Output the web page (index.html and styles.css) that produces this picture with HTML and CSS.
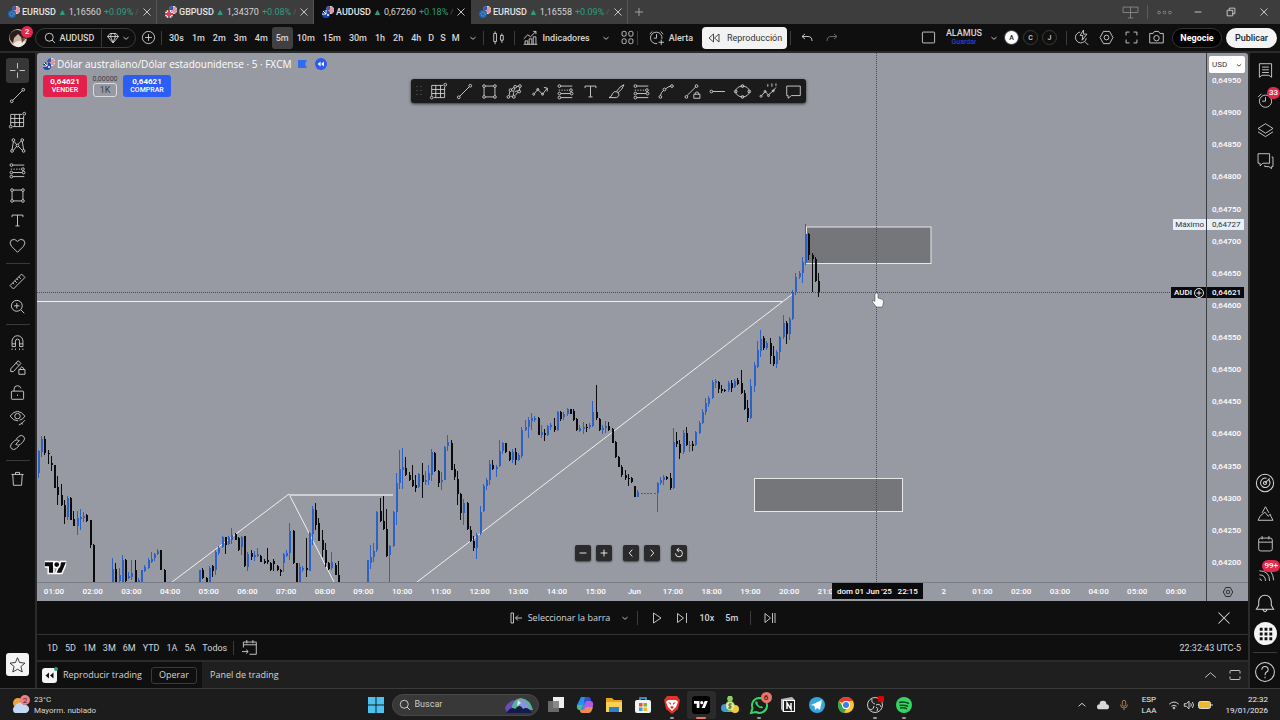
FILE: index.html
```
<!DOCTYPE html>
<html lang="es">
  <head>
    <meta charset="UTF-8" />
    <meta name="viewport" content="width=device-width, initial-scale=1.0" />
    <title>AUDUSD 0,67260</title>
    <link rel="stylesheet" href="styles.css">
  </head>
  <body>
    <svg class="sprite" aria-hidden="true">
      <symbol id="close" viewBox="0 0 28 28"><path d="M7 7l14 14M21 7L7 21"/></symbol>
      <symbol id="plus" viewBox="0 0 28 28"><path d="M14 6v16M6 14h16"/></symbol>
      <symbol id="minus" viewBox="0 0 28 28"><path d="M6 14h16"/></symbol>
      <symbol id="down" viewBox="0 0 28 28"><path d="M8 12l6 5 6-5"/></symbol>
      <symbol id="up" viewBox="0 0 28 28"><path d="M6 17l8-7 8 7"/></symbol>
      <symbol id="left" viewBox="0 0 28 28"><path d="M17 6l-7 8 7 8"/></symbol>
      <symbol id="right" viewBox="0 0 28 28"><path d="M11 6l7 8-7 8"/></symbol>
      <symbol id="search" viewBox="0 0 28 28"><circle cx="12.500" cy="12.500" r="8"/><path d="M18 18l6 6"/></symbol>
      <symbol id="gem" viewBox="0 0 28 28"><path d="M8 5h12l5 6-11 13L3 11zM3 11h22M9 11l5 12 5-12M11 5l-2 6M17 5l2 6"/></symbol>
      <symbol id="plus-circle" viewBox="0 0 28 28"><circle cx="14" cy="14" r="9"/><path d="M14 9v10M9 14h10"/></symbol>
      <symbol id="candles" viewBox="0 0 28 28"><path d="M7 8h4v12H7zM9 5v3M9 20v4M17 11h4v7h-4zM19 8v3M19 18v4"/></symbol>
      <symbol id="indicators" viewBox="0 0 28 28"><path d="M6 24v-5h4v5M12 24v-8h4v8M18 24V13h4v11M4 24h20M4 16l6-6 4 3 8-8M18 5h4v4"/></symbol>
      <symbol id="grid4" viewBox="0 0 28 28"><rect x="6" y="5" width="6" height="7" rx="2"/><rect x="16" y="5" width="6" height="7" rx="2"/><rect x="6" y="16" width="6" height="7" rx="2"/><rect x="16" y="16" width="6" height="7" rx="2"/></symbol>
      <symbol id="alarm" viewBox="0 0 28 28"><path d="M22 16a8.500 8.500 0 1 0-7 7M14 9v6h-4M4 9l4-4M24 9l-4-4M21 17v8M17 21h8"/></symbol>
      <symbol id="clock" viewBox="0 0 28 28"><circle cx="14" cy="15" r="9"/><path d="M14 9v6H9M3 9l5-5M25 9l-5-5"/></symbol>
      <symbol id="rewind" viewBox="0 0 28 28"><path d="M13 6l-9 8 9 8zM24 6l-9 8 9 8z"/></symbol>
      <symbol id="undo" viewBox="0 0 28 28"><path d="M10 6l-6 5 6 5M4 11h12q8 0 8 9"/></symbol>
      <symbol id="redo" viewBox="0 0 28 28"><path d="M18 6l6 5-6 5M24 11H12q-8 0-8 9"/></symbol>
      <symbol id="pane" viewBox="0 0 28 28"><rect x="5" y="6" width="18" height="16" rx="1"/></symbol>
      <symbol id="quick" viewBox="0 0 28 28"><path d="M12 6a8 8 0 1 0 9 9M19 20l5 5M17 3l-5 8h4l-1 7 7-9h-5z"/></symbol>
      <symbol id="hex" viewBox="0 0 28 28"><path d="M9.500 5h9l5 9-5 9h-9l-5-9z"/><circle cx="14" cy="14" r="3.500"/></symbol>
      <symbol id="full" viewBox="0 0 28 28"><path d="M6 11V6h5M17 6h5v5M22 17v5h-5M11 22H6v-5"/></symbol>
      <symbol id="camera" viewBox="0 0 28 28"><path d="M4 8h5l2-3h6l2 3h5v14H4z"/><circle cx="14" cy="15" r="4"/></symbol>

      <symbol id="cross" viewBox="0 0 28 28"><path d="M14 3v8M14 17v8M3 14h8M17 14h8"/></symbol>
      <symbol id="trend" viewBox="0 0 28 28"><circle cx="5.500" cy="22.500" r="2"/><circle cx="22.500" cy="5.500" r="2"/><path d="M7 21L21 7"/></symbol>
      <symbol id="fibgrid" viewBox="0 0 28 28"><path d="M4 5h17M4 11h19M4 17h19M7 23h16M4 5v16M10 5v18M17 5v18M23 7v16"/><circle cx="4" cy="23" r="2"/><circle cx="24" cy="4" r="2"/></symbol>
      <symbol id="pattern" viewBox="0 0 28 28"><circle cx="6" cy="22" r="2"/><circle cx="8" cy="6" r="2"/><circle cx="14" cy="14" r="2"/><circle cx="21" cy="6" r="2"/><circle cx="23" cy="22" r="2"/><path d="M6 20L8 8M9 8l4 5M15 12l5-5M21 8l2 12M8 21l5-6M15 15l6 6"/></symbol>
      <symbol id="fib" viewBox="0 0 28 28"><path d="M7 6h17M7 17h14M7 23h17"/><path d="M4 12h15" stroke-dasharray="2 2"/><circle cx="5" cy="6" r="2"/><circle cx="22" cy="12" r="2"/><circle cx="5" cy="17" r="2"/><circle cx="5" cy="23" r="2"/><circle cx="23" cy="17" r="2"/></symbol>
      <symbol id="rect" viewBox="0 0 28 28"><path d="M8 6h12M8 22h12M6 8v12M22 8v12"/><circle cx="6" cy="6" r="2"/><circle cx="22" cy="6" r="2"/><circle cx="6" cy="22" r="2"/><circle cx="22" cy="22" r="2"/></symbol>
      <symbol id="type" viewBox="0 0 28 28"><path d="M6 9V6h16v3M14 6v16M11 22h6"/></symbol>
      <symbol id="heart" viewBox="0 0 28 28"><path d="M14 24L5 15q-4-5 0-9 5-3 9 2 4-5 9-2 4 4 0 9z"/></symbol>
      <symbol id="ruler" viewBox="0 0 28 28"><path d="M3 20L20 3l5 5L8 25zM7 16l2 2M10 13l3 3M13 10l2 2M16 7l3 3"/></symbol>
      <symbol id="zoomin" viewBox="0 0 28 28"><circle cx="13" cy="13" r="8"/><path d="M13 9v8M9 13h8M19 19l5 5"/></symbol>
      <symbol id="magnet" viewBox="0 0 28 28"><path d="M6 20v-8a8 8 0 0 1 16 0v8h-5v-8a3 3 0 0 0-6 0v8zM6 16h5M17 16h5M6 23v2M11 23v2M17 23v2M22 23v2"/></symbol>
      <symbol id="pencil" viewBox="0 0 28 28"><path d="M4 20v-4L15 4l4 4L8 20zM12 7l4 4M16 17h9v7h-9zM18 17v-2q2.500-4 5 0v2"/></symbol>
      <symbol id="lock" viewBox="0 0 28 28"><rect x="5" y="12" width="18" height="12" rx="1"/><path d="M9 12V9q0-5 5-5 4 0 5 4M14 17v2"/></symbol>
      <symbol id="eye" viewBox="0 0 28 28"><path d="M3 12q11-14 22 0-3 5-8 6M3 12q5 7 12 7"/><circle cx="14" cy="12" r="4"/><path d="M16 25l4-2 5-5M19 22l3 2"/></symbol>
      <symbol id="link" viewBox="0 0 28 28"><path d="M12 9l4-4q4-3 7 0t0 7l-5 5q-3 2-6 0M16 19l-4 4q-4 3-7 0t0-7l5-5q3-2 6 0M11 17l6-6"/></symbol>
      <symbol id="trash" viewBox="0 0 28 28"><path d="M5 8h18M11 8V5h6v3M7 8l1 16h12l1-16"/></symbol>
      <symbol id="star" viewBox="0 0 28 28"><path d="M14 4l3 7 8 1-6 5 2 8-7-4-7 4 2-8-6-5 8-1z"/></symbol>

      <symbol id="list" viewBox="0 0 28 28"><path d="M5 4h18v20l-4-3H9l-4 3zM9 9h10M9 13h10M9 17h10"/></symbol>
      <symbol id="layers" viewBox="0 0 28 28"><path d="M3 11l11-7 11 7-11 7zM3 16l11 7 11-7"/></symbol>
      <symbol id="chat" viewBox="0 0 28 28"><path d="M3 4h17v14H10l-4 4v-4H3zM23 9h2v14h-2v3l-4-3h-6v-2"/></symbol>
      <symbol id="target" viewBox="0 0 28 28"><circle cx="14" cy="14" r="11"/><path d="M19 10a6 6 0 1 1-3-2M14 14l6-6"/><circle cx="14" cy="14" r="2"/></symbol>
      <symbol id="mount" viewBox="0 0 28 28"><path d="M9 13l5-9 5 9M3 24l3-6M3 24h22l-3-6M6 18l7-6 5 6 3-3 1 3"/></symbol>
      <symbol id="calendar" viewBox="0 0 28 28"><rect x="4" y="6" width="20" height="19" rx="3"/><path d="M4 12h20M9 3v5M19 3v5"/></symbol>
      <symbol id="feed" viewBox="0 0 28 28"><path d="M5 22q3 0 3 3M5 16q9 0 9 9M5 10q15 0 15 15M12 4q13 5 14 20"/></symbol>
      <symbol id="bell" viewBox="0 0 28 28"><path d="M3 22h22l-3-5v-5q-1-8-8-8t-8 8v5zM11 22q3 6 6 0"/></symbol>
      <symbol id="help" viewBox="0 0 28 28"><circle cx="14" cy="14" r="12"/><path d="M10 11q0-4 4-4t4 4q0 2-2 3t-2 4M14 20v2"/></symbol>

      <symbol id="poly" viewBox="0 0 28 28"><path d="M6 20l1-6M9 11l4-3M17 7l3-1M22 8l-1 5M19 15l-4 5M11 21H8M10 13l3 1 1-5M15 14l4-1M13 15l-1 5"/><circle cx="5" cy="22" r="2"/><circle cx="8" cy="12" r="2"/><circle cx="22" cy="6" r="2"/><circle cx="13" cy="22" r="2"/><circle cx="15" cy="7" r="2"/><circle cx="21" cy="14" r="2"/></symbol>
      <symbol id="zigzag" viewBox="0 0 28 28"><path d="M5 17l5-6 7 7 7-9M19 8l5 1v5"/><circle cx="4" cy="18" r="1.500"/><circle cx="10" cy="11" r="1.500"/><circle cx="17" cy="18" r="1.500"/></symbol>
      <symbol id="brush" viewBox="0 0 28 28"><path d="M3 23q4-1 5-6 3-5 8-2 4 5-2 8zM14 14q5-8 11-10-2 7-9 12"/></symbol>
      <symbol id="curve" viewBox="0 0 28 28"><path d="M5 20Q6 15 10 12M13 10q3-3 7-4"/><circle cx="5" cy="22" r="2"/><circle cx="11" cy="11" r="2"/><circle cx="22" cy="6" r="2"/></symbol>
      <symbol id="trendlock" viewBox="0 0 28 28"><path d="M6 20L19 7M16 18h9v6h-9zM18 18v-2q2.500-3 5 0v2"/><circle cx="5" cy="22" r="2"/><circle cx="20" cy="6" r="2"/></symbol>
      <symbol id="hline" viewBox="0 0 28 28"><path d="M7 14h18"/><circle cx="5" cy="14" r="2"/></symbol>
      <symbol id="ellipse" viewBox="0 0 28 28"><ellipse cx="14" cy="14" rx="10" ry="8"/><circle cx="4" cy="14" r="2"/><circle cx="24" cy="14" r="2"/><circle cx="14" cy="6" r="2"/><circle cx="14" cy="22" r="2"/></symbol>
      <symbol id="elliott" viewBox="0 0 28 28"><path d="M4 20l5-6 5 5 7-6 4-5M13 3v4M19 2v5M25 2v4"/><circle cx="3" cy="21" r="1.500"/><circle cx="9" cy="14" r="1.500"/><circle cx="14" cy="20" r="1.500"/><circle cx="21" cy="13" r="1.500"/></symbol>
      <symbol id="comment" viewBox="0 0 28 28"><path d="M4 6h20v14H11l-5 4v-4H4z"/></symbol>
      <symbol id="reset" viewBox="0 0 28 28"><path d="M6 15a8 8 0 1 0 8-8H9M14 2L9 7l5 5"/></symbol>
      <symbol id="pick" viewBox="0 0 28 28"><path d="M4 4h5v20H4zM13 14h13M18 9l-5 5 5 5"/></symbol>
      <symbol id="play" viewBox="0 0 28 28"><path d="M7 4l15 10L7 24z"/></symbol>
      <symbol id="step" viewBox="0 0 28 28"><path d="M5 5l12 9-12 9zM23 4v20"/></symbol>
      <symbol id="end" viewBox="0 0 28 28"><path d="M4 5l11 9-11 9zM19 4v20M24 4v20"/></symbol>
      <symbol id="goto" viewBox="0 0 28 28"><path d="M5 14V6h19v18H14M5 10h19M10 3v5M19 3v5M3 20h9M9 17l3 3-3 3"/></symbol>

      <symbol id="us" viewBox="0 0 12 12"><circle cx="8" cy="4" r="4" fill="#eee"/><path d="M5 2h6M4 4h8M5 6h6" stroke="#d8414c" stroke-width="1"/><path d="M4 4a4 4 0 0 1 4-4v4z" fill="#3657b5"/></symbol>
      <symbol id="au" viewBox="0 0 12 12"><use href="#us"/><circle cx="4" cy="8" r="4" fill="#1848b0"/><path d="M0 8h4V4M1 5l3 3" stroke="#fff" stroke-width="1"/><circle cx="6" cy="9" r="1" fill="#fff"/></symbol>
      <symbol id="eu" viewBox="0 0 12 12"><use href="#us"/><circle cx="4" cy="8" r="4" fill="#1c64b8"/><circle cx="4" cy="8" r="2" fill="none" stroke="#9fb98b" stroke-dasharray="1"/></symbol>
      <symbol id="gb" viewBox="0 0 12 12"><use href="#us"/><circle cx="4" cy="8" r="4" fill="#eee"/><path d="M1 5l6 6M7 5l-6 6" stroke="#7688c4"/><path d="M4 4v8M0 8h8" stroke="#d8414c" stroke-width="2"/></symbol>
      <symbol id="tv" viewBox="0 0 36 28"><path d="M14 22H7V11H0V4h14zM28 22h-8l7.500-18h8z"/><circle cx="20" cy="8" r="4"/></symbol>
    </svg>

    <header class="tabs">
      <div class="tab"><svg class="flag"><use href="#eu"/></svg><b>EURUSD</b><i>▲</i><span>1,16560</span><em>+0.09%</em><small>/</small><button aria-label="Cerrar"><svg class="ico s14"><use href="#close"/></svg></button></div>
      <div class="tab"><svg class="flag"><use href="#gb"/></svg><b>GBPUSD</b><i>▲</i><span>1,34370</span><em>+0.08%</em><small>/</small><button aria-label="Cerrar"><svg class="ico s14"><use href="#close"/></svg></button></div>
      <div class="tab active"><svg class="flag"><use href="#au"/></svg><b>AUDUSD</b><i>▲</i><span>0,67260</span><em>+0.18%</em><small>/</small><button aria-label="Cerrar"><svg class="ico s14"><use href="#close"/></svg></button></div>
      <div class="tab"><svg class="flag"><use href="#eu"/></svg><b>EURUSD</b><i>▲</i><span>1,16558</span><em>+0.09%</em><small>/</small><button aria-label="Cerrar"><svg class="ico s14"><use href="#close"/></svg></button></div>
      <button class="new-tab" aria-label="Nueva pestaña"><svg class="ico s14"><use href="#plus"/></svg></button>
      <div class="window-buttons">
        <button aria-label="Vincular"><svg class="ico s19 dim" viewBox="0 0 28 28"><path d="M3 6h22v8H3zM14 6v16M10 22h8"/></svg></button>
        <span class="sep"></span>
        <button aria-label="Más"><svg class="ico s19 dim" viewBox="0 0 28 28"><circle cx="6" cy="14" r="2"/><circle cx="14" cy="14" r="2"/><circle cx="22" cy="14" r="2"/></svg></button>
        <button aria-label="Minimizar"><svg class="ico s12"><use href="#minus"/></svg></button>
        <button aria-label="Restaurar"><svg class="ico s12" viewBox="0 0 28 28"><path d="M5 10h13v13H5zM10 10V5h13v13h-5"/></svg></button>
        <button aria-label="Cerrar"><svg class="ico s14"><use href="#close"/></svg></button>
      </div>
    </header>

    <nav class="toolbar">
      <button class="avatar" aria-label="Cuenta">
        <svg viewBox="0 0 20 20"><circle cx="10" cy="10" r="9" fill="#cdb5a4"/><path d="M2 6q6-8 15 0l2 5-5-1-4-4-4 4-1 5q-5-4-3-9z" fill="#2a1d1b"/><path d="M5 17q3-5 10-4l3 1q-4 6-9 5z" fill="#f0e8e2"/><path d="M13 9l4 2-3 4z" fill="#74432f"/></svg>
        <span class="badge">2</span>
      </button>
      <div class="symbol">
        <button class="symbol-name"><svg class="ico s14"><use href="#search"/></svg>AUDUSD</button>
        <button class="symbol-gem" aria-label="Plan"><svg class="ico s14"><use href="#gem"/></svg><svg class="ico s12"><use href="#down"/></svg></button>
      </div>
      <button class="cell" aria-label="Comparar"><svg class="ico s19"><use href="#plus-circle"/></svg></button>
      <span class="sep"></span>
      <div class="frames">
        <button>30s</button><button>1m</button><button>2m</button><button>3m</button><button>4m</button><button class="on">5m</button><button>10m</button><button>15m</button><button>30m</button><button>1h</button><button>2h</button><button>4h</button><button class="long">D</button><button class="long">S</button><button class="long">M</button>
        <button aria-label="Más intervalos"><svg class="ico s12"><use href="#down"/></svg></button>
      </div>
      <span class="sep"></span>
      <button class="cell wide" aria-label="Velas"><svg class="ico s19"><use href="#candles"/></svg></button>
      <span class="sep"></span>
      <button class="label"><svg class="ico s19"><use href="#indicators"/></svg>Indicadores</button>
      <button class="cell" aria-label="Favoritos"><svg class="ico s12"><use href="#down"/></svg></button>
      <button class="cell tight" aria-label="Plantillas"><svg class="ico s19"><use href="#grid4"/></svg></button>
      <span class="sep"></span>
      <button class="label alert"><svg class="ico s19"><use href="#alarm"/></svg>Alerta</button>
      <button class="replay-button"><svg class="ico s14"><use href="#rewind"/></svg>Reproducción</button>
      <span class="sep"></span>
      <button class="cell after" aria-label="Deshacer"><svg class="ico s14"><use href="#undo"/></svg></button>
      <button class="cell dim" aria-label="Rehacer"><svg class="ico s14"><use href="#redo"/></svg></button>
      <div class="toolbar-right">
        <button class="cell" aria-label="Diseño"><svg class="ico s19"><use href="#pane"/></svg></button>
        <button class="layout-name">ALAMUS<span>Guardar</span></button>
        <button class="cell tight" aria-label="Diseños"><svg class="ico s12"><use href="#down"/></svg></button>
        <button class="round on">A</button><button class="round">C</button><button class="round">J</button>
        <span class="sep"></span>
        <button class="cell" aria-label="Búsqueda rápida"><svg class="ico s19"><use href="#quick"/></svg></button>
        <button class="cell" aria-label="Configuración"><svg class="ico s19"><use href="#hex"/></svg></button>
        <button class="cell" aria-label="Pantalla completa"><svg class="ico s19"><use href="#full"/></svg></button>
        <button class="cell" aria-label="Instantánea"><svg class="ico s19"><use href="#camera"/></svg></button>
        <button class="pill dark">Negocie</button>
        <button class="pill">Publicar</button>
      </div>
    </nav>

    <main class="workspace">
      <aside class="tools">
        <button class="on" aria-label="Cruz"><svg class="ico s19"><use href="#cross"/></svg></button>
        <button aria-label="Línea de tendencia"><svg class="ico s19"><use href="#trend"/></svg></button>
        <button aria-label="Cuadrícula"><svg class="ico s19"><use href="#fibgrid"/></svg></button>
        <button aria-label="Patrones"><svg class="ico s19"><use href="#pattern"/></svg></button>
        <button aria-label="Fibonacci"><svg class="ico s19"><use href="#fib"/></svg></button>
        <button aria-label="Rectángulo"><svg class="ico s19"><use href="#rect"/></svg></button>
        <button aria-label="Texto"><svg class="ico s19"><use href="#type"/></svg></button>
        <button aria-label="Iconos"><svg class="ico s19"><use href="#heart"/></svg></button>
        <hr />
        <button aria-label="Medir"><svg class="ico s19"><use href="#ruler"/></svg></button>
        <button aria-label="Ampliar"><svg class="ico s19"><use href="#zoomin"/></svg></button>
        <hr />
        <button aria-label="Imán"><svg class="ico s19"><use href="#magnet"/></svg></button>
        <button aria-label="Mantener dibujo"><svg class="ico s19"><use href="#pencil"/></svg></button>
        <button aria-label="Bloquear"><svg class="ico s19"><use href="#lock"/></svg></button>
        <button aria-label="Ocultar"><svg class="ico s19"><use href="#eye"/></svg></button>
        <button aria-label="Vincular"><svg class="ico s19"><use href="#link"/></svg></button>
        <hr />
        <button aria-label="Eliminar"><svg class="ico s19"><use href="#trash"/></svg></button>
        <button class="star" aria-label="Favoritos"><svg class="ico s19"><use href="#star"/></svg></button>
      </aside>

      <section class="center">
        <div class="chart">
          <div class="pane">
            <svg class="plot" viewBox="37 53 1169 529">
              <rect x="806.500" y="227" width="124.500" height="36.500" class="zone"/>
              <rect x="754.500" y="478.500" width="148" height="33" class="zone"/>
              <path class="line" d="M37 301.500H782M417 582L794 293M172 582l117-88 45 88"/>
              <path class="line thick" d="M289 495h104"/>
              <g id="candles-layer"></g>
              <path class="crosshair" d="M37 292.500h1169M876.500 53v529"/>
              <g class="hand"><path d="M875 294q1.500-2 3 0v4l2 .5 1.500.5 1.500 1 .5 2-1 5h-6l-4-5q-.5-2 1-1.500l1.500 1z"/></g>
            </svg>
            <div class="legend">
              <svg class="flag"><use href="#au"/></svg>
              <h1>Dólar australiano/Dólar estadounidense · 5 · FXCM</h1>
              <svg class="mark" viewBox="0 0 10 8"><path d="M0 0h9L7 4l2 4H0z"/></svg>
              <svg class="rew" viewBox="0 0 28 28"><circle cx="14" cy="14" r="14"/><path d="M13 8l-7 6 7 6zM21 8l-7 6 7 6z"/></svg>
            </div>
            <div class="orders">
              <button class="sell"><b>0,64621</b>VENDER</button>
              <div class="lot"><span>0,00000</span><button>1K</button></div>
              <button class="buy"><b>0,64621</b>COMPRAR</button>
            </div>
            <div class="favorites">
              <svg class="grip" viewBox="0 0 6 12"><path d="M1 1v10M5 1v10"/></svg>
              <button aria-label="Cuadrícula"><svg class="ico s19"><use href="#fibgrid"/></svg></button>
              <button aria-label="Tendencia"><svg class="ico s19"><use href="#trend"/></svg></button>
              <button aria-label="Rectángulo"><svg class="ico s19"><use href="#rect"/></svg></button>
              <button aria-label="Polígono"><svg class="ico s19"><use href="#poly"/></svg></button>
              <button aria-label="Trayectoria"><svg class="ico s19"><use href="#zigzag"/></svg></button>
              <button aria-label="Fibonacci"><svg class="ico s19"><use href="#fib"/></svg></button>
              <button aria-label="Texto"><svg class="ico s19"><use href="#type"/></svg></button>
              <button aria-label="Pincel"><svg class="ico s19"><use href="#brush"/></svg></button>
              <button aria-label="Extensión"><svg class="ico s19"><use href="#fib"/></svg></button>
              <button aria-label="Curva"><svg class="ico s19"><use href="#curve"/></svg></button>
              <button aria-label="Ángulo"><svg class="ico s19"><use href="#trendlock"/></svg></button>
              <button aria-label="Rayo horizontal"><svg class="ico s19"><use href="#hline"/></svg></button>
              <button aria-label="Elipse"><svg class="ico s19"><use href="#ellipse"/></svg></button>
              <button aria-label="Elliott"><svg class="ico s19"><use href="#elliott"/></svg></button>
              <button aria-label="Comentario"><svg class="ico s19"><use href="#comment"/></svg></button>
            </div>
            <div class="nav-buttons">
              <button aria-label="Alejar"><svg class="ico s12"><use href="#minus"/></svg></button>
              <button aria-label="Acercar"><svg class="ico s12"><use href="#plus"/></svg></button>
              <button class="apart" aria-label="Izquierda"><svg class="ico s12"><use href="#left"/></svg></button>
              <button aria-label="Derecha"><svg class="ico s12"><use href="#right"/></svg></button>
              <button class="apart" aria-label="Restablecer"><svg class="ico s12"><use href="#reset"/></svg></button>
            </div>
            <svg class="watermark" viewBox="-3 1 42 24"><use href="#tv" width="36" height="28"/></svg>
            <span class="tag high">Máximo</span>
            <span class="tag last">AUDI<svg class="ico s14"><use href="#plus-circle"/></svg></span>
          </div>
          <div class="prices">
            <select aria-label="Divisa"><option>USD</option></select>
            <svg class="ico s12 select-arrow"><use href="#down"/></svg>
            <span>0,64950</span><span>0,64900</span><span>0,64850</span><span>0,64800</span>
            <span>0,64750</span><span>0,64700</span><span>0,64650</span><span>0,64600</span>
            <span>0,64550</span><span>0,64500</span><span>0,64450</span><span>0,64400</span>
            <span>0,64350</span><span>0,64300</span><span>0,64250</span><span>0,64200</span>
            <span class="price-tag high">0,64727</span>
            <span class="price-tag last">0,64621</span>
          </div>
          <div class="times">
            <span>01:00</span><span>02:00</span><span>03:00</span><span>04:00</span><span>05:00</span><span>06:00</span><span>07:00</span><span>08:00</span><span>09:00</span><span>10:00</span><span>11:00</span><span>12:00</span><span>13:00</span><span>14:00</span><span>15:00</span><span>Jun</span><span>17:00</span><span>18:00</span><span>19:00</span><span>20:00</span><span>21:00</span><span></span><span></span><span>2</span><span>01:00</span><span>02:00</span><span>03:00</span><span>04:00</span><span>05:00</span><span>06:00</span>
            <span class="time-tag"><span>dom 01 Jun '25</span><span>22:15</span></span>
          </div>
          <button class="axis-settings" aria-label="Escala"><svg class="ico s14"><use href="#hex"/></svg></button>
        </div>

        <div class="replay">
          <div class="replay-controls">
            <button class="label"><svg class="ico s14"><use href="#pick"/></svg>Seleccionar la barra</button>
            <button class="cell" aria-label="Opciones"><svg class="ico s12"><use href="#down"/></svg></button>
            <span class="sep"></span>
            <button class="cell apart" aria-label="Reproducir"><svg class="ico s14"><use href="#play"/></svg></button>
            <button class="cell" aria-label="Avanzar"><svg class="ico s14"><use href="#step"/></svg></button>
            <button class="cell">10x</button>
            <button class="cell">5m</button>
            <span class="sep apart"></span>
            <button class="cell apart" aria-label="Ir al final"><svg class="ico s14"><use href="#end"/></svg></button>
          </div>
          <button class="replay-close" aria-label="Cerrar"><svg class="ico s22"><use href="#close"/></svg></button>
        </div>

        <div class="ranges">
          <button>1D</button><button>5D</button><button>1M</button><button>3M</button><button>6M</button><button>YTD</button><button>1A</button><button>5A</button><button>Todos</button>
          <span class="sep"></span>
          <button aria-label="Ir a"><svg class="ico s19"><use href="#goto"/></svg></button>
          <button class="clock">22:32:43 UTC-5</button>
        </div>

        <div class="panels">
          <div class="panel-tab on">
            <svg class="panel-icon" viewBox="0 0 16 16"><rect x="0" y="1" width="15" height="15" rx="3" fill="#f4f4f4"/><path d="M7 5.500L3.500 8.500 7 11.500zM11.500 5.500L8 8.500l3.500 3z" fill="#111"/><circle cx="14" cy="2" r="2" fill="#269b7b"/></svg>
            <a href="#">Reproducir trading</a>
            <button>Operar</button>
          </div>
          <a class="panel-tab" href="#">Panel de trading</a>
          <div class="panel-right">
            <button aria-label="Abrir panel"><svg class="ico s19"><use href="#up"/></svg></button>
            <button aria-label="Maximizar"><svg class="ico s14" viewBox="0 0 28 28"><path d="M4 11V7q0-2 2-2h4M18 5h4q2 0 2 2v4M24 17v4q0 2-2 2h-4M10 23H6q-2 0-2-2v-4M10 5h8M10 23h8"/></svg></button>
          </div>
        </div>
      </section>

      <aside class="widgets">
        <button aria-label="Lista"><svg class="ico s19"><use href="#list"/></svg></button>
        <button aria-label="Alertas"><svg class="ico s19"><use href="#clock"/></svg><span class="badge">33</span></button>
        <button aria-label="Objetos"><svg class="ico s19"><use href="#layers"/></svg></button>
        <button aria-label="Chat"><svg class="ico s19"><use href="#chat"/></svg></button>
        <span class="spacer"></span>
        <button aria-label="Screener"><svg class="ico s22"><use href="#target"/></svg></button>
        <button aria-label="Pine"><svg class="ico s19"><use href="#mount"/></svg></button>
        <button aria-label="Calendario"><svg class="ico s19"><use href="#calendar"/></svg></button>
        <button aria-label="Noticias"><svg class="ico s19"><use href="#feed"/></svg><span class="badge">99+</span></button>
        <button aria-label="Notificaciones"><svg class="ico s22"><use href="#bell"/></svg></button>
        <button aria-label="Productos"><svg class="apps" viewBox="0 0 24 24"><circle cx="12" cy="12" r="12"/><path d="M6 6h3v3H6zM11 6h3v3h-3zM16 6h3v3h-3zM6 11h3v3H6zM11 11h3v3h-3zM16 11h3v3h-3zM6 16h3v3H6zM11 16h3v3h-3zM16 16h3v3h-3z"/></svg></button>
        <hr />
        <button aria-label="Ayuda"><svg class="ico s22"><use href="#help"/></svg></button>
      </aside>
    </main>

    <footer class="taskbar">
      <button class="weather">
        <svg viewBox="0 0 20 20"><circle cx="7" cy="8" r="5" fill="#e8a53a"/><path d="M4 18a4 4 0 0 1 0-7 5 5 0 0 1 9-1 4 4 0 0 1 2 8z" fill="#c3d8f5"/><circle cx="14" cy="5" r="5" fill="#f07f86"/><text x="14" y="8">2</text></svg>
        <span>23°C<br />Mayorm. nublado</span>
      </button>
      <div class="apps-row">
        <button aria-label="Inicio"><svg viewBox="0 0 20 20"><path d="M2 2h7.500v7.500H2zM10.500 2H18v7.500h-7.500zM2 10.500h7.500V18H2zM10.500 10.500H18V18h-7.500z" fill="#4cc2f1"/></svg></button>
        <div class="search">
          <svg class="ico s14"><use href="#search"/></svg>
          <input type="text" placeholder="Buscar" aria-label="Buscar" />
          <svg class="search-art" viewBox="0 0 30 16"><path d="M1 11q2-5 8-8l5 2-3 11H3z" fill="#6d4bb5"/><path d="M8 12Q8 2 17 1q9 1 12 12z" fill="#55b59a"/><path d="M13 8l3-6 6 3 4 8z" fill="#8e8fe0"/><path d="M14 3l3 3-4 3z" fill="#e7e8d0"/><path d="M2 16q5-7 9-4 5-6 8 0 5-3 9 4z" fill="#141b4c"/></svg>
        </div>
        <button aria-label="Vista de tareas"><svg viewBox="0 0 20 20"><path d="M7 2h11v11H7z" fill="#eee"/><path d="M2 6h11v11H2z" fill="#777" opacity=".85"/></svg></button>
        <button aria-label="Copilot"><svg viewBox="0 0 20 20"><path d="M6 2h7l-4 13H5q-4 0-3-5z" fill="#2a8fe6"/><path d="M2 10q0 6 4 5l2-5z" fill="#45c08a"/><path d="M13 2q3 0 3 4h-4l-2 4-1-4 1-4z" fill="#3450d0"/><path d="M14 18H7l4-12h4q4 0 3 5z" fill="#b45be0"/><path d="M7 18q-2 0-2-3h3q2 0 3-3h7l-1 3q-1 3-3 3z" fill="#ee8c4d"/></svg></button>
        <button aria-label="Explorador"><svg viewBox="0 0 20 20"><path d="M2 3h6l2 2h8v12H2z" fill="#e5a51c"/><path d="M2 7h16v10H2z" fill="#fbd052"/><path d="M5 12h10v5H5z" fill="#2b7fd0"/></svg></button>
        <button aria-label="Tienda"><svg viewBox="0 0 20 20"><path d="M7 6V3h6v3" fill="none" stroke="#3eb0e8" stroke-width="1.500"/><rect x="2" y="5" width="16" height="13" rx="2" fill="#f2f2f2"/><path d="M6 8h3.500v3.500H6z" fill="#e8502e"/><path d="M10.500 8H14v3.500h-3.500z" fill="#7db82c"/><path d="M6 12.500h3.500V16H6z" fill="#2f9fe6"/><path d="M10.500 12.500H14V16h-3.500z" fill="#f5b81c"/></svg></button>
        <button class="running" aria-label="Brave"><svg viewBox="0 0 20 20"><path d="M5 1h10l3 4-2 9-6 5-6-5-2-9z" fill="#e33228"/><path d="M6 5h8l2 2-2 5-4 4-4-4-2-5z" fill="#fff"/><path d="M6 7l3 1v2zM14 7l-3 1v2zM8 12l2-1 2 1-2 2z" fill="#e33228"/></svg></button>
        <button class="running current" aria-label="TradingView"><svg viewBox="0 0 20 20"><rect x="1" y="1" width="18" height="18" rx="3" fill="#000"/><use href="#tv" x="3" y="4" width="14" height="12" fill="#fff"/></svg></button>
        <button aria-label="Finanzas"><svg viewBox="0 0 20 20"><path d="M7 4l1-3h4l1 3-1 2H8z" fill="#8bd05f"/><path d="M8 6q-5 4-4 11h12q1-7-4-11z" fill="#79bd48"/><circle cx="5" cy="13" r="4" fill="#3c9ad6"/><circle cx="15" cy="14" r="4" fill="#f1cb3f"/><circle cx="10" cy="11" r="4" fill="#ece59b"/><path d="M10 8v6M12 9H9v2h2v2H8" fill="none" stroke="#4c7a38"/></svg></button>
        <button class="running" aria-label="WhatsApp"><svg viewBox="0 0 20 20"><path d="M2 18l1.500-5A7.500 7.500 0 1 1 7 17z" fill="none" stroke="#36d367" stroke-width="2"/><path d="M7 6q-2 2 1 5t6 2l-1-2-2 .5-2.500-2.500.5-1.500z" fill="#36d367"/></svg><span class="badge">6</span></button>
        <button aria-label="Notion"><svg viewBox="0 0 20 20"><path d="M3 4l11-2 3 3H5v12l-2-3z" fill="#bbb"/><rect x="5.500" y="5.500" width="11" height="11" fill="#222" stroke="#fff"/><path d="M9 14V8l4 6V8" fill="none" stroke="#fff" stroke-width="1.500"/></svg></button>
        <button aria-label="Telegram"><svg viewBox="0 0 20 20"><circle cx="10" cy="10" r="8" fill="#35a6de"/><path d="M4 10l11-5-2 10-3-2-2 2-.5-4z" fill="#fff"/></svg></button>
        <button aria-label="Chrome"><svg viewBox="0 0 20 20"><circle cx="10" cy="10" r="8" fill="#fbc92e"/><path d="M10 10L3 6q2.500-4 7-4t7 4h-7z" fill="#e0402f"/><path d="M3 6l5 8 2 0-2 4Q2 17 2 10q0-2 1-4z" fill="#30a552"/><circle cx="10" cy="10" r="4" fill="#fff"/><circle cx="10" cy="10" r="3" fill="#3b7ded"/></svg></button>
        <button class="running" aria-label="OBS"><svg viewBox="0 0 20 20"><circle cx="10" cy="10" r="7.500" fill="#222" stroke="#ccc"/><path d="M10 9q-4-1-3-5M11 10q4-2 5 2M9 11q-1 5-5 3M11 12q3 1 1 4" fill="none" stroke="#ccc"/><rect x="13" y="1" width="6" height="6" rx="1" fill="#e00000"/></svg></button>
        <button class="running" aria-label="Spotify"><svg viewBox="0 0 20 20"><circle cx="10" cy="10" r="8" fill="#34d663"/><path d="M5 7.500q5-1.500 10 1M5.500 10.500q5-1 8.500 1M6 13q4-1 7 1" fill="none" stroke="#103f1e" stroke-width="1.500"/></svg></button>
      </div>
      <div class="tray">
        <button aria-label="Iconos ocultos"><svg class="ico s12"><use href="#up"/></svg></button>
        <button aria-label="OneDrive"><svg class="s12" viewBox="0 0 14 12"><path d="M3 11a3 3 0 0 1 0-6 4 4 0 0 1 8 0 3 3 0 0 1 0 6z" fill="#d8d8d8"/></svg></button>
        <button aria-label="Micrófono"><svg class="ico s12 mic" viewBox="0 0 28 28"><rect x="10" y="3" width="8" height="14" rx="4"/><path d="M6 13q0 8 8 8t8-8M14 21v5"/></svg></button>
        <button class="lang">ESP<br />LAA</button>
        <button class="system" aria-label="Red, volumen y batería">
          <svg class="ico s12" viewBox="0 0 28 28"><path d="M3 12q11-10 22 0M8 17q6-5 12 0"/><circle cx="14" cy="21" r="2"/></svg>
          <svg class="ico s12" viewBox="0 0 28 28"><path d="M3 11h5l6-6v18l-6-6H3zM18 10q3 4 0 8M22 7q5 7 0 14"/></svg>
          <svg class="battery" viewBox="0 0 15 8"><rect x=".5" y=".5" width="12" height="7" rx="2"/><path d="M14 3v2"/></svg>
        </button>
        <button class="date">22:32<br />19/01/2026</button>
      </div>
    </footer>
    <script src="chart.js"></script>
  </body>
</html>
```
FILE: styles.css
```
* {
  box-sizing: border-box;
}
body {
  font-family: Roboto, Arial, sans-serif;
  font-size: 9px;
  line-height: 12px;
  margin: 0;
  height: 100vh;
  display: flex;
  flex-direction: column;
  overflow: hidden;
  background-color: #2b2b2b;
  color: #d6d6d6;
}
button {
  display: flex;
  align-items: center;
  justify-content: center;
  flex: none;
  margin: 0;
  padding: 0;
  border: none;
  background: none;
  color: inherit;
  font: inherit;
  cursor: pointer;
}
a {
  color: inherit;
  text-decoration: none;
}
hr {
  width: 24px;
  height: 1px;
  margin: 5px 0;
  border: none;
  background-color: #3a3a3a;
}

/* icons */
.sprite {
  position: absolute;
  width: 0;
  height: 0;
}
.ico {
  flex: none;
  fill: none;
  stroke: currentColor;
  stroke-width: 1.3;
}
.s12 {
  width: 12px;
  height: 12px;
  stroke-width: 2;
}
.s14 {
  width: 14px;
  height: 14px;
  stroke-width: 1.8;
}
.s19 {
  width: 19px;
  height: 19px;
}
.s22 {
  width: 22px;
  height: 22px;
}
.flag {
  flex: none;
  width: 12px;
  height: 12px;
}
.dim {
  opacity: 0.5;
}
.badge {
  position: absolute;
  top: 2px;
  right: 0;
  min-width: 12px;
  padding: 0 2px;
  border-radius: 6px;
  background-color: #e0294f;
  color: #fff;
  font-size: 8px;
  font-weight: 500;
  text-align: center;
}
.sep {
  flex: none;
  width: 1px;
  height: 14px;
  background-color: #3c3c3c;
}

/* window tabs */
.tabs {
  flex: none;
  display: flex;
  height: 24px;
  background-color: #3d3d3d;
}
.tab {
  display: flex;
  align-items: center;
  width: 157px;
  padding: 0 2px 0 8px;
  border-right: 1px solid #555;
  white-space: nowrap;
}
.tab.active {
  background-color: #0f0f0f;
  border-color: #0f0f0f;
}
.tab b {
  margin-left: 2px;
  font-weight: 500;
  color: #e4e4e4;
}
.tab i {
  width: 13px;
  color: #2f9e7e;
  font-size: 9px;
  font-style: normal;
  text-align: center;
}
.tab em {
  margin-left: 3px;
  color: #2f9e7e;
  font-style: normal;
}
.tab small {
  margin-left: 2px;
  color: #666;
}
.tab button {
  margin-left: auto;
}
.new-tab {
  width: 22px;
  color: #aaa;
}
.window-buttons {
  display: flex;
  align-items: center;
  margin-left: auto;
}
.window-buttons button {
  width: 33px;
}
.window-buttons .sep {
  background-color: #5a5a5a;
}

/* top toolbar */
.toolbar {
  flex: none;
  display: flex;
  align-items: center;
  height: 27px;
  background-color: #0f0f0f;
  font-weight: 500;
}
.avatar {
  position: relative;
  width: 35px;
  height: 27px;
}
.avatar svg {
  width: 20px;
  height: 20px;
}
.avatar .badge {
  right: 2px;
}
.symbol {
  display: flex;
  width: 101px;
  height: 20px;
  border: 1px solid #3a3a3a;
  border-radius: 10px;
}
.symbol-name {
  width: 66px;
  gap: 3px;
  border-right: 1px solid #3a3a3a;
}
.symbol-gem {
  flex: 1;
}
.cell {
  width: 25px;
  height: 22px;
}
.cell.tight {
  width: 18px;
}
.cell.wide {
  width: 30px;
}
.cell.after {
  margin-left: 3px;
}
.frames {
  display: flex;
  margin-left: 3px;
}
.frames button {
  height: 22px;
  padding: 0 4px;
}
.frames .long {
  padding: 0 3px;
}
.frames .on {
  border-radius: 3px;
  background-color: #404040;
}
.label {
  gap: 3px;
  padding: 0 4px 0 6px;
}
.alert {
  margin-left: 3px;
}
.replay-button {
  width: 85px;
  height: 22px;
  margin: 0 3px 0 5px;
  gap: 6px;
  border-radius: 4px;
  background-color: #f2f2f2;
  color: #333;
  font-weight: 400;
}
.toolbar-right {
  display: flex;
  align-items: center;
  margin-left: auto;
  padding-right: 3px;
}
.toolbar-right .sep {
  margin: 0 2px 0 6px;
}
.layout-name {
  flex-direction: column;
  margin: 0 3px 0 5px;
  line-height: 9px;
}
.layout-name span {
  color: #2f50e0;
  font-size: 7px;
  font-weight: 400;
}
.round {
  width: 15px;
  height: 15px;
  margin-left: 1px;
  margin-right: 3px;
  border: 1px solid #3a3a3a;
  border-radius: 50%;
  font-size: 7px;
}
.round.on {
  background-color: #fff;
  color: #111;
}
.pill {
  width: 51px;
  height: 20px;
  margin-left: 4px;
  border-radius: 10px;
  background-color: #f4f4f4;
  color: #222;
}
.pill.dark {
  width: 50px;
  margin-left: 3px;
  border: 1px solid #333;
  background-color: #000;
  color: #fff;
  font-weight: 700;
}

/* workspace */
.workspace {
  flex: 1;
  min-height: 0;
  display: flex;
  gap: 2px;
  padding-top: 2px;
}
.tools,
.widgets {
  flex: none;
  display: flex;
  flex-direction: column;
  align-items: center;
  background-color: #0f0f0f;
}
.tools {
  width: 35px;
  padding: 5px 0 12px;
}
.tools button {
  width: 23px;
  height: 25px;
}
.tools .on {
  border-radius: 3px;
  background-color: #373737;
}
.tools .star {
  height: 23px;
  margin-top: auto;
  border-radius: 3px;
  background-color: #f4f4f4;
  color: #222;
}
.widgets {
  width: 30px;
  padding: 2px 0 1px;
}
.widgets button {
  position: relative;
  width: 30px;
  height: 30px;
}
.widgets hr {
  margin: 4px 0;
}
.spacer {
  flex: 1;
}
.apps {
  width: 23px;
  height: 23px;
}
.apps circle {
  fill: #f4f4f4;
}
.apps path {
  fill: #111;
}
.center {
  flex: 1;
  min-width: 0;
  display: flex;
  flex-direction: column;
}

/* chart */
.chart {
  flex: 1;
  min-height: 0;
  display: grid;
  grid-template-columns: 1fr 42px;
  grid-template-rows: 1fr 19px;
  border-radius: 3px 3px 0 0;
  background-color: #989aa3;
  color: #fff;
}
.pane {
  position: relative;
  min-height: 0;
  overflow: hidden;
}
.plot {
  position: absolute;
  width: 100%;
  height: 100%;
}
.zone {
  fill: #5a5a5a;
  fill-opacity: 0.55;
  stroke: #e8e8e8;
}
.line {
  fill: none;
  stroke: #f0f0f2;
}
.thick {
  stroke: #cfd0d4;
  stroke-width: 2;
}
.crosshair {
  fill: none;
  stroke: #4a4b52;
  stroke-dasharray: 1 1;
}
.hand path {
  fill: #fff;
  stroke: #333;
  stroke-width: 0.5;
}
.up {
  fill: #2d62c4;
}
.down {
  fill: #0b0b0e;
}
.legend {
  position: relative;
  display: flex;
  align-items: center;
  height: 22px;
  padding-left: 6px;
}
.legend h1 {
  margin: 0 7px 0 2px;
  font-family: "Open Sans", Roboto, sans-serif;
  font-size: 10px;
  font-weight: 500;
}
.mark {
  width: 10px;
  height: 8px;
  margin-right: 7px;
  fill: #2f6df0;
}
.rew {
  width: 12px;
  height: 12px;
  fill: #2c5af0;
}
.rew path {
  fill: #fff;
}
.orders {
  position: relative;
  display: flex;
  gap: 6px;
  padding-left: 6px;
  font-size: 7px;
  font-weight: 500;
  line-height: 9px;
}
.orders button {
  flex-direction: column;
}
.orders b {
  font-size: 8px;
}
.sell,
.buy {
  width: 44px;
  height: 22px;
  border-radius: 3px;
  background-color: #e3204b;
}
.buy {
  width: 48px;
  background-color: #2c5df5;
}
.lot {
  display: flex;
  flex-direction: column;
  align-items: center;
  width: 24px;
  color: #3c3d42;
  font-weight: 400;
  line-height: 8px;
}
.lot button {
  width: 24px;
  height: 14px;
  border: 1px solid #dcdce0;
  border-radius: 3px;
  font-size: 9px;
}
.favorites {
  position: absolute;
  top: 26px;
  left: 32%;
  display: flex;
  align-items: center;
  justify-content: space-between;
  width: 395px;
  height: 24px;
  padding: 0 0 0 5px;
  border-radius: 3px;
  background-color: #1b1b1b;
  box-shadow: 0 1px 3px #333;
  color: #d6d6d6;
}
.favorites button {
  width: 25px;
}
.grip {
  width: 6px;
  height: 12px;
  margin-right: 4px;
  stroke: #666;
  stroke-dasharray: 1 3;
}
.nav-buttons {
  position: absolute;
  bottom: 21px;
  left: 46%;
  display: flex;
  gap: 5px;
}
.nav-buttons button {
  width: 16px;
  height: 16px;
  border-radius: 2px;
  background-color: #2b2b2d;
  box-shadow: 0 1px 2px #444;
}
.nav-buttons .apart {
  margin-left: 6px;
}
.watermark {
  position: absolute;
  left: 6px;
  bottom: 7px;
  width: 25px;
  height: 15px;
  fill: #0b0b0e;
  stroke: #fff;
  stroke-width: 5;
  paint-order: stroke;
}
.tag,
.price-tag {
  position: absolute;
  height: 11px;
  font-size: 8px;
  font-weight: 500;
  line-height: 11px;
}
.tag {
  right: 0;
  display: flex;
  align-items: center;
}
.high {
  top: 166px;
  background-color: #e6f0fb;
  color: #333;
  font-weight: 400;
}
.tag.high {
  padding: 0 2px;
}
.last {
  top: 234px;
  background-color: #0b0b0e;
  color: #fff;
}
.tag.last {
  padding-left: 3px;
}
.prices {
  position: relative;
  display: flex;
  flex-direction: column;
  justify-content: space-between;
  padding: 23px 0 14px 5px;
  border-left: 1px solid #3c3d42;
  font-size: 8px;
  font-weight: 500;
  line-height: 10px;
}
.prices .price-tag {
  left: 0;
  width: 37px;
  padding-left: 5px;
  line-height: 11px;
}
.prices select {
  position: absolute;
  top: 3px;
  left: 2px;
  width: 36px;
  height: 17px;
  padding: 0 3px;
  appearance: none;
  border: none;
  border-radius: 2px;
  background-color: #fff;
  color: #333;
  font: inherit;
  font-weight: 400;
}
.select-arrow {
  position: absolute;
  top: 6px;
  left: 27px;
  width: 10px;
  color: #111;
}
.times {
  position: relative;
  display: flex;
  align-items: center;
  justify-content: space-between;
  padding: 0 15px 0 2px;
  border-top: 1px solid #7b7d86;
  font-size: 8px;
  font-weight: 500;
}
.times > span {
  width: 30px;
  text-align: center;
}
.times .time-tag {
  position: absolute;
  top: 0;
  left: 68%;
  display: flex;
  justify-content: space-between;
  width: 91px;
  height: 16px;
  padding: 0 5px;
  background-color: #0b0b0e;
  line-height: 18px;
}
.axis-settings {
  border-top: 1px solid #7b7d86;
  border-left: 1px solid #3c3d42;
  color: #222;
}

/* replay, ranges and panels under the chart */
.replay {
  flex: none;
  display: flex;
  align-items: center;
  justify-content: center;
  position: relative;
  height: 34px;
  border-bottom: 1px solid #333;
  background-color: #0f0f0f;
  font-weight: 500;
}
.replay-controls {
  display: flex;
  align-items: center;
}
.replay .label {
  gap: 5px;
  padding-right: 2px;
  font-family: "Open Sans", Roboto, sans-serif;
}
.replay .apart {
  margin-left: 6px;
}
.replay-close {
  position: absolute;
  right: 13px;
}
.ranges {
  flex: none;
  display: flex;
  align-items: center;
  height: 25px;
  padding: 0 7px 0 6px;
  background-color: #0f0f0f;
}
.ranges button {
  padding: 0 3px 0 4px;
}
.ranges .sep {
  margin: 0 2px 0 3px;
}
.ranges .clock {
  margin-left: auto;
  padding: 0;
}
.panels {
  flex: none;
  display: flex;
  height: 28px;
  padding-top: 2px;
  font-family: "Open Sans", Roboto, sans-serif;
}
.panel-tab {
  display: flex;
  align-items: center;
  padding: 0 8px;
  background-color: #1f1f1f;
}
.panel-tab.on {
  gap: 5px;
  width: 165px;
  padding: 0 5px;
  background-color: #0f0f0f;
}
.panel-tab button {
  width: 46px;
  height: 17px;
  margin-left: auto;
  border: 1px solid #3a3a3a;
  border-radius: 3px;
}
.panel-icon {
  width: 16px;
  height: 16px;
}
.panel-right {
  flex: 1;
  display: flex;
  justify-content: flex-end;
  gap: 8px;
  padding-right: 6px;
  background-color: #1f1f1f;
}

/* taskbar */
.taskbar {
  flex: none;
  display: grid;
  grid-template-columns: 1fr auto 1fr;
  align-items: center;
  height: 32px;
  border-top: 1px solid #3a3a3a;
  background-color: #1c1c1c;
  font-size: 8px;
  line-height: 11px;
}
.weather {
  justify-self: start;
  gap: 3px;
  padding-left: 11px;
  text-align: left;
}
.weather svg {
  width: 20px;
  height: 20px;
}
.weather text {
  font-size: 8px;
  text-anchor: middle;
  fill: #5a1c20;
}
.apps-row {
  display: flex;
  align-items: center;
}
.apps-row button {
  position: relative;
  width: 29px;
  height: 28px;
}
.apps-row button > svg {
  width: 20px;
  height: 20px;
}
.apps-row .badge {
  top: 1px;
  right: 2px;
  min-width: 11px;
  background-color: #e5776e;
  color: #401512;
  line-height: 11px;
}
.running::after {
  content: "";
  position: absolute;
  bottom: 0;
  width: 4px;
  height: 2px;
  border-radius: 1px;
  background-color: #999;
}
.current {
  border-radius: 3px;
  background-color: #2b2b2b;
}
.current::after {
  width: 10px;
  background-color: #e5776e;
}
.search {
  display: flex;
  align-items: center;
  width: 147px;
  height: 22px;
  margin: 0 3px 0 1px;
  padding: 0 4px 0 5px;
  border: 1px solid #484848;
  border-radius: 11px;
  background-color: #383838;
}
.search input {
  flex: 1;
  min-width: 0;
  padding: 0 3px;
  border: none;
  outline: none;
  background: none;
  color: #ddd;
  font: inherit;
  font-size: 9px;
}
.search input::placeholder {
  color: #ccc;
}
.search-art {
  width: 30px;
  height: 16px;
}
.tray {
  display: flex;
  align-items: center;
  justify-content: flex-end;
  padding-right: 12px;
  color: #eee;
}
.tray button {
  width: 21px;
}
.tray .mic {
  color: #b98a5c;
}
.tray .lang {
  width: 30px;
}
.tray .system {
  width: 52px;
  gap: 3px;
}
.battery {
  width: 15px;
  height: 8px;
  fill: #f0b62c;
  stroke: #ddd;
}
.tray .date {
  width: 52px;
  justify-content: flex-end;
  text-align: right;
}
```
FILE: chart.js
```
// Candles by run. Each run starts at a bar index; a row is
// [high, body top, body bottom, low, up] in plot coordinates.
const FIRST_X = 39;
const STEP = 3.223;

const runs = [
  [0, [
    [450,451,473,478,1],[436,439,452,457,1],[436,439,453,455,0],[450,453,454,464,0],
    [456,463,465,471,0],[465,465,488,488,0],[476,487,495,505,0],[484,495,505,506,0],
    [500,505,517,524,0],[496,498,517,520,1],[497,498,520,520,0],[511,519,526,526,0],
    [511,518,526,535,1],[509,517,519,530,1],[512,516,518,522,1],[514,515,521,522,0],
    [520,520,545,548,0],[544,545,583,583,0],
  ]],
  [23, [
    [558,569,583,583,1],[563,569,583,583,0],[568,575,581,583,1],[555,560,582,583,1],
    [559,560,581,583,0],[572,576,578,579,1],[560,573,577,580,1],[560,570,582,583,0],
    [578,580,583,583,1],[570,570,583,583,1],[565,567,571,572,1],[558,560,568,569,1],
    [552,559,562,563,1],[553,554,558,561,1],[549,551,554,555,1],[550,550,570,570,0],
    [569,570,583,583,0],
  ]],
  [50, [
    [570,570,583,583,1],[568,570,578,579,0],[577,578,583,583,0],[566,568,582,583,1],
    [565,566,571,577,0],[550,552,570,575,1],[546,548,553,555,1],[536,537,547,548,1],
    [537,537,545,554,0],[536,537,544,545,1],[528,535,540,544,1],[533,534,540,540,0],
    [537,538,550,551,0],[536,537,547,555,1],[536,536,566,567,0],[552,554,567,571,1],
    [550,553,557,560,0],[551,555,557,561,1],[548,554,556,557,1],[555,556,562,562,0],
    [559,561,563,564,0],[548,560,562,564,0],[562,563,570,571,0],[559,561,564,571,0],
    [565,566,570,571,0],[569,570,572,576,0],[553,554,563,572,1],[550,553,556,557,1],
    [523,531,553,560,1],[530,531,563,564,0],[563,563,583,583,0],[563,567,583,583,1],
    [566,568,570,572,1],[538,568,570,577,0],[532,533,571,571,1],[506,509,534,545,1],
    [503,510,525,530,0],[518,523,541,541,0],[530,540,550,557,0],[543,550,563,567,0],
    [562,563,569,570,0],[552,562,568,570,1],[563,565,575,575,0],[561,575,583,583,0],
  ]],
  [102, [
    [560,560,583,583,1],[545,557,563,569,1],[543,551,557,562,1],[511,512,550,552,1],
    [498,511,521,522,0],[496,521,529,530,0],[509,529,556,557,0],[545,546,555,583,1],
    [511,512,546,547,1],[473,483,512,525,1],[450,469,483,489,1],[448,467,470,489,1],
    [457,468,475,476,0],[472,475,480,481,0],[465,480,486,487,0],[475,485,488,492,0],
    [473,474,487,488,1],[463,475,482,498,0],[471,480,482,485,1],[465,473,480,485,1],
    [449,452,475,481,1],[452,453,471,472,0],[470,471,483,487,0],[472,480,482,490,1],
    [446,447,480,480,1],[435,442,446,451,1],[440,443,470,470,0],[464,469,477,480,0],
    [471,479,494,505,0],[493,494,513,520,0],[499,503,513,525,1],[502,503,529,530,0],
    [526,530,541,542,0],[536,541,548,551,0],[533,535,548,559,1],[506,512,533,535,1],
    [484,486,511,512,1],[478,480,486,490,1],[460,464,480,485,1],[460,465,469,470,0],
    [465,467,469,477,1],[440,451,466,467,1],[442,443,451,454,1],[443,443,452,453,0],
    [451,452,460,461,0],[449,452,460,463,1],[448,452,460,465,0],[453,455,460,461,1],
    [427,430,456,458,1],[420,427,430,431,1],[417,420,427,438,1],[413,418,421,430,1],
    [416,418,420,422,1],[417,418,435,435,0],[425,432,435,438,1],[429,433,435,441,0],
    [425,426,435,436,1],[423,425,427,430,1],[418,426,430,432,0],[411,412,430,431,1],
    [411,412,419,421,0],[412,414,417,420,1],[408,409,414,416,1],[409,409,414,414,0],
    [409,411,420,421,0],[418,419,430,431,0],[425,428,431,432,1],[422,427,429,434,1],
    [424,427,428,432,0],[423,425,427,429,1],[401,412,426,427,1],[385,412,418,420,0],
    [418,419,430,431,0],[425,428,430,434,1],[421,426,428,433,1],[422,426,430,431,0],
    [428,429,443,443,0],[441,442,457,458,0],[456,457,467,467,0],[465,467,475,477,0],
    [470,475,478,480,0],[474,478,479,486,0],[477,478,482,483,0],[486,486,497,497,0],
    [490,492,497,497,1],[493,493,494,494,1],[493,493,494,494,1],[493,493,494,494,1],
    [493,493,494,494,1],[493,493,494,494,1],[482,483,493,512,1],[477,480,483,485,1],
    [475,477,480,485,1],[476,477,479,480,0],[473,478,488,490,0],[428,442,488,489,1],
    [432,441,444,447,0],[440,444,453,459,0],[430,433,452,454,1],[427,433,445,446,0],
    [441,445,446,452,1],[441,444,446,451,0],[431,432,445,446,1],[421,423,433,434,1],
    [409,412,423,424,1],[398,403,412,415,1],[396,398,404,407,1],[380,382,398,399,1],
    [379,381,383,388,1],[381,382,389,393,0],[385,389,391,393,0],[389,390,391,392,0],
    [381,383,390,392,1],[380,383,388,392,0],[379,381,387,388,1],[378,380,384,385,0],
    [370,383,393,394,0],[390,393,409,410,0],[400,408,418,422,0],[379,386,418,419,1],
    [362,365,386,392,1],[341,350,367,368,1],[330,339,351,357,1],[336,338,348,350,0],
    [341,343,348,350,1],[338,343,356,364,0],[346,356,364,366,0],[350,352,364,368,1],
    [336,337,352,360,1],[315,323,337,339,1],[321,323,334,344,0],[317,319,334,340,1],
    [290,292,319,320,1],[273,277,292,295,1],[271,273,277,279,1],[257,262,273,283,1],
    [224,234,263,265,1],[233,234,255,260,0],[253,255,259,292,0],[257,259,281,282,0],
    [273,281,293,297,0],
  ]],
];

const layer = document.getElementById("candles-layer");

function bar(x, top, width, bottom, up) {
  const rect = document.createElementNS("http://www.w3.org/2000/svg", "rect");
  rect.setAttribute("x", x);
  rect.setAttribute("y", top);
  rect.setAttribute("width", width);
  rect.setAttribute("height", Math.max(bottom - top, 1));
  rect.setAttribute("class", up ? "up" : "down");
  layer.appendChild(rect);
}

runs.forEach(([start, rows]) => {
  rows.forEach(([high, top, bottom, low, up], i) => {
    const x = Math.round(FIRST_X + (start + i) * STEP) - 1;
    bar(x, high, 1, low, up);
    bar(x, top, 2, bottom, up);
  });
});
```
